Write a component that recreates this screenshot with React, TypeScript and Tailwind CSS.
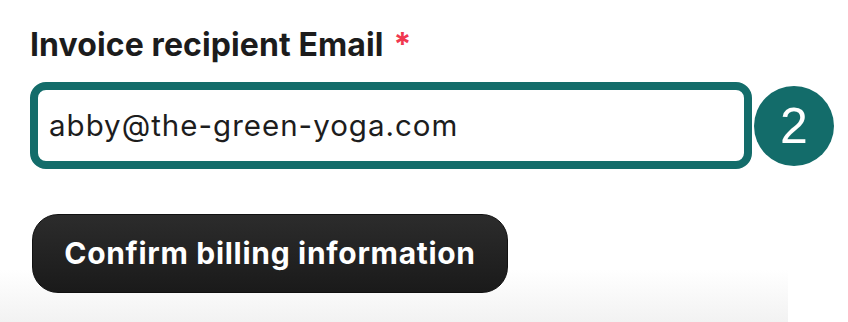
export default function App() {
  return (
    <div className="w-[848px] h-[322px] bg-white overflow-hidden font-['Inter',sans-serif]">
      <div className="w-[788px] h-full bg-[linear-gradient(to_bottom,#ffffff_270px,#f2f2f2_322px)]">
        <div className="pl-[30px] pt-[26px]">
          {/* Label */}
          <label className="flex items-start text-[32px] leading-[38px] font-bold text-[#1c1c1c] tracking-[0.1px]">
            Invoice recipient Email
            <span className="ml-[10px] text-[#f0384f]">*</span>
          </label>

          {/* Input + step badge */}
          <div className="mt-[18px] flex items-center gap-[2px] w-[804px]">
            <div className="w-[722px] h-[87px] rounded-[16px] border-[8px] border-[#136c6a] bg-white flex items-center pl-[11px]">
              <span className="text-[29.5px] text-[#1d1d1d] tracking-[1px]">abby@the-green-yoga.com</span>
            </div>
            <div className="w-[80px] h-[80px] rounded-full bg-[#136c6a] flex items-center justify-center shrink-0">
              <span className="text-white text-[50px] leading-none font-['Liberation_Sans',sans-serif]">2</span>
            </div>
          </div>

          {/* Confirm button */}
          <button className="mt-[45px] ml-[2px] w-[476px] h-[79px] rounded-[26px] border border-[#111] bg-[linear-gradient(to_bottom,#2c2c2c,#1a1a1a)] text-white text-[30px] font-bold tracking-[0.7px] flex items-center justify-center">
            Confirm billing information
          </button>
        </div>
      </div>
    </div>
  );
}
